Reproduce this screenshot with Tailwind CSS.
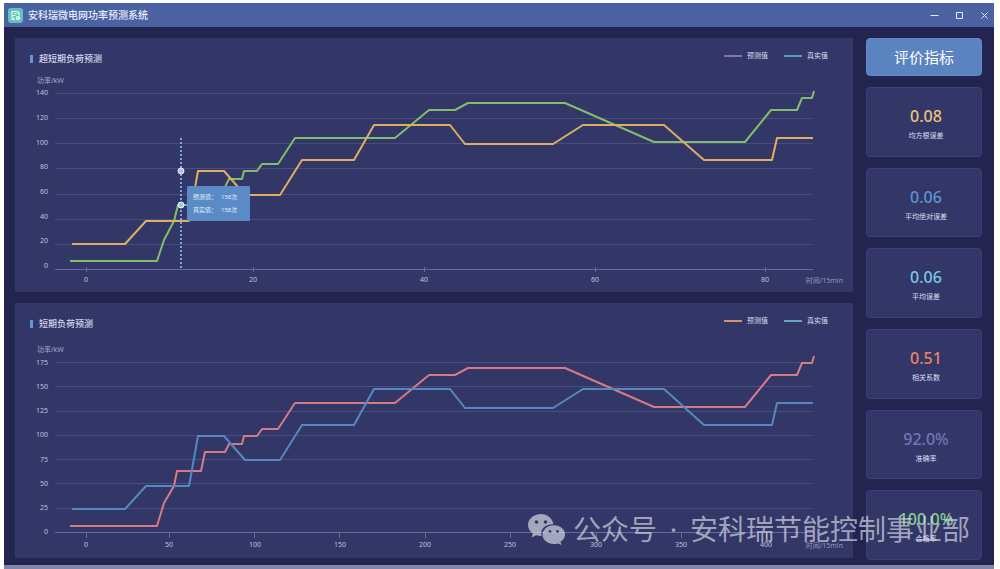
<!DOCTYPE html>
<html lang="zh-CN">

<head>
  <meta charset="UTF-8">
  <meta name="viewport" content="width=device-width, initial-scale=1">
  <title>安科瑞微电网功率预测系统</title>
  <script src="https://cdn.jsdelivr.net/npm/@tailwindcss/browser@4"></script>
</head>

<body class="bg-white pt-[3px] pl-1 pr-[6px] overflow-x-hidden font-['Noto_Sans','Noto_Sans_CJK_SC',sans-serif]">
  <div class="relative bg-[#242450] border-b-4 border-[#8286a5]">

    <!-- Title bar -->
    <header class="flex items-center h-6 pl-1 pr-[5px] bg-[#4a61a2] text-[#e6ebfa]">
      <svg class="size-[15px]" viewBox="0 0 15 15">
        <rect width="15" height="15" rx="3" fill="#62c3bb" />
        <path d="M4 11.500V3.500h5.500l1.500 1.500v2.500M4 7.500h3.500M6 5.500h3M6 9.500v2H4" fill="none" stroke="#e9fbf8" stroke-width="1.200" />
        <circle cx="10" cy="10" r="1.800" fill="#bdebe4" stroke="#e9fbf8" />
      </svg>
      <h1 class="ml-[5px] text-[10px] leading-6 font-medium">安科瑞微电网功率预测系统</h1>
      <div class="ml-auto flex gap-4">
        <button aria-label="最小化"><svg class="size-[9px]" viewBox="0 0 9 9" stroke="currentColor"><path d="M0.500 4.500h8" /></svg></button>
        <button aria-label="最大化"><svg class="size-[9px]" viewBox="0 0 9 9" fill="none" stroke="currentColor"><path d="M1.500 1.500h6v6h-6z" /></svg></button>
        <button aria-label="关闭"><svg class="size-[9px]" viewBox="0 0 9 9" stroke="currentColor"><path d="M1.500 1.500l6 6M7.500 1.500l-6 6" /></svg></button>
      </div>
    </header>

    <main class="flex gap-[13px] pt-[11px] pl-[11px] pr-3 pb-[5px]">

      <!-- Charts -->
      <div class="flex-1 min-w-0 flex flex-col gap-[11px] pb-[2px]">
        <section class="bg-[#323768]">
          <div class="flex items-start h-8 pt-3 pl-[15px] pr-[25px]">
            <h2 class="flex items-center gap-[6px] text-[9px] leading-[18px] font-medium text-[#d5d8ee]">
              <span class="w-[3px] h-2 bg-[#6b93d3]"></span>超短期负荷预测
            </h2>
            <ul class="ml-auto flex gap-4 text-[7px] leading-3 text-[#dcdff2]">
              <li class="flex items-center gap-[5px]"><span class="w-[18px] h-[2px] bg-[#8672b2]"></span>预测值</li>
              <li class="flex items-center gap-[5px]"><span class="w-[18px] h-[2px] bg-[#6099c8]"></span>真实值</li>
            </ul>
          </div>
          <svg class="block w-full" viewBox="15 70 838 222" font-size="7" fill="#bfc3df">
            <text x="37" y="83" fill="#a5a9cc">功率/kW</text>
            <path d="M55 93.500H813M55 118.500H813M55 143.500H813M55 168.500H813M55 194.500H813M55 219.500H813M55 244.500H813" stroke="#484c80" />
            <path d="M55 269.500H813M86.500 267v5M253.500 267v5M424.500 267v5M595.500 267v5M765.500 267v5" stroke="#656ba2" />
            <g text-anchor="end">
              <text x="48" y="95">140</text>
              <text x="48" y="120">120</text>
              <text x="48" y="145">100</text>
              <text x="48" y="169">80</text>
              <text x="48" y="194">60</text>
              <text x="48" y="219">40</text>
              <text x="48" y="243">20</text>
              <text x="48" y="268">0</text>
            </g>
            <g text-anchor="middle">
              <text x="86" y="282">0</text>
              <text x="253" y="282">20</text>
              <text x="424" y="282">40</text>
              <text x="595" y="282">60</text>
              <text x="765" y="282">80</text>
            </g>
            <text x="843" y="283" text-anchor="end" fill="#9398bf">时间/15min</text>
            <polyline fill="none" stroke="#7fbf68" stroke-width="2" stroke-linejoin="round" points="70,261 157,261 164,240 174,221 178,205 201,205 205,187 225,187 229,179 242,179 244,171 257,171 262,164 278,164 295,138 395,138 429,110 455,110 468,103 565,103 654,142 745,142 771,110 797,110 802,98 812,98 814,91" />
            <polyline fill="none" stroke="#dfae60" stroke-width="2" stroke-linejoin="round" points="72,244 125,244 146,221 189,221 198,171 224,171 245,195 280,195 302,160 354,160 374,125 450,125 465,144 553,144 583,125 664,125 704,160 772,160 777,138 813,138" />
            <path d="M181 138V269" stroke="#6fa8e2" stroke-width="2" stroke-dasharray="2 2" />
            <circle cx="181" cy="171" r="3" fill="#c9b9e0" stroke="#f0edfa" />
            <circle cx="181" cy="205" r="3" fill="#9fc6ea" stroke="#f0f6fd" />
            <rect x="187" y="186" width="63" height="35" rx="1" fill="#5a8bc6" />
            <g font-size="6" fill="#e3edfa">
              <text x="193" y="199">预测值：</text>
              <text x="221" y="199">158次</text>
              <text x="193" y="212">真实值：</text>
              <text x="221" y="212">158次</text>
            </g>
          </svg>
        </section>

        <section class="bg-[#323768]">
          <div class="flex items-start h-8 pt-3 pl-[15px] pr-[25px]">
            <h2 class="flex items-center gap-[6px] text-[9px] leading-[18px] font-medium text-[#d5d8ee]">
              <span class="w-[3px] h-2 bg-[#6b93d3]"></span>短期负荷预测
            </h2>
            <ul class="ml-auto flex gap-4 text-[7px] leading-3 text-[#dcdff2]">
              <li class="flex items-center gap-[5px]"><span class="w-[18px] h-[2px] bg-[#d0956c]"></span>预测值</li>
              <li class="flex items-center gap-[5px]"><span class="w-[18px] h-[2px] bg-[#68a4ba]"></span>真实值</li>
            </ul>
          </div>
          <svg class="block w-full" viewBox="15 335 838 223" font-size="7" fill="#bfc3df">
            <text x="37" y="352" fill="#a5a9cc">功率/kW</text>
            <path d="M55 362.500H813M55 386.500H813M55 411.500H813M55 435.500H813M55 459.500H813M55 483.500H813M55 508.500H813" stroke="#484c80" />
            <path d="M55 532.500H813M86.500 533v5M169.500 533v5M254.500 533v5M339.500 533v5M425.500 533v5M510.500 533v5M596.500 533v5M681.500 533v5M766.500 533v5" stroke="#656ba2" />
            <g text-anchor="end">
              <text x="48" y="365">175</text>
              <text x="48" y="389">150</text>
              <text x="48" y="413">125</text>
              <text x="48" y="437">100</text>
              <text x="48" y="462">75</text>
              <text x="48" y="486">50</text>
              <text x="48" y="510">25</text>
              <text x="48" y="534">0</text>
            </g>
            <g text-anchor="middle">
              <text x="86" y="547">0</text>
              <text x="169" y="547">50</text>
              <text x="255" y="547">100</text>
              <text x="340" y="547">150</text>
              <text x="425" y="547">200</text>
              <text x="510" y="547">250</text>
              <text x="596" y="547">300</text>
              <text x="681" y="547">350</text>
              <text x="766" y="547">400</text>
            </g>
            <text x="843" y="548" text-anchor="end" fill="#9398bf">时间/15min</text>
            <polyline fill="none" stroke="#d67a84" stroke-width="2" stroke-linejoin="round" points="70,526 157,526 164,503 174,486 177,471 201,471 205,452 225,452 229,444 242,444 244,436 257,436 262,429 278,429 295,403 395,403 429,375 455,375 468,368 565,368 654,407 745,407 771,375 797,375 802,363 812,363 814,356" />
            <polyline fill="none" stroke="#5688c0" stroke-width="2" stroke-linejoin="round" points="72,509 125,509 146,486 189,486 198,436 224,436 245,460 280,460 302,425 354,425 374,389 450,389 465,408 553,408 583,389 664,389 704,425 772,425 777,403 813,403" />
          </svg>
        </section>
      </div>

      <!-- Metrics -->
      <aside class="w-[116px] flex flex-col gap-[11px] text-center">
        <button class="h-[38px] rounded bg-[#5a83c0] border border-[#6189c6] text-[15px] leading-5 text-white">评价指标</button>
        <div class="flex-1 flex flex-col justify-center pt-2 pl-1 rounded border border-[#3b4177] bg-[#323768]">
          <p class="text-base leading-5 font-medium text-[#efc27c]">0.08</p>
          <p class="text-[7px] leading-5 text-[#dcdff2]">均方根误差</p>
        </div>
        <div class="flex-1 flex flex-col justify-center pt-2 pl-1 rounded border border-[#3b4177] bg-[#323768]">
          <p class="text-base leading-5 font-medium text-[#5c94cf]">0.06</p>
          <p class="text-[7px] leading-5 text-[#dcdff2]">平均绝对误差</p>
        </div>
        <div class="flex-1 flex flex-col justify-center pt-2 pl-1 rounded border border-[#3b4177] bg-[#323768]">
          <p class="text-base leading-5 font-medium text-[#76c8e0]">0.06</p>
          <p class="text-[7px] leading-5 text-[#dcdff2]">平均误差</p>
        </div>
        <div class="flex-1 flex flex-col justify-center pt-2 pl-1 rounded border border-[#3b4177] bg-[#323768]">
          <p class="text-base leading-5 font-medium text-[#e88468]">0.51</p>
          <p class="text-[7px] leading-5 text-[#dcdff2]">相关系数</p>
        </div>
        <div class="flex-1 flex flex-col justify-center pt-2 pl-1 rounded border border-[#3b4177] bg-[#323768]">
          <p class="text-base leading-5 font-medium text-[#7474b8]">92.0%</p>
          <p class="text-[7px] leading-5 text-[#dcdff2]">准确率</p>
        </div>
        <div class="flex-1 flex flex-col justify-center pt-2 pl-1 rounded border border-[#3b4177] bg-[#323768]">
          <p class="text-base leading-5 font-medium text-[#86cf8c]">100.0%</p>
          <p class="text-[7px] leading-5 text-[#dcdff2]">合格率</p>
        </div>
      </aside>
    </main>

    <!-- Watermark -->
    <div class="absolute right-6 bottom-4 flex items-center whitespace-nowrap text-[28px] leading-10 text-[#d4d5e2]/70 pointer-events-none">
      <svg class="w-[39px] h-8 mr-[7px]" viewBox="0 0 39 32" fill="currentColor">
        <path fill-rule="evenodd" d="M14 1C6.500 1 1 6 1 12c0 3.600 1.800 6.500 4.800 8.500L4.600 24.500l4.700-2.300c1.800.5 3.600.8 5.300.7C12.800 17 17.500 11.300 26.500 11.300 25.500 5.300 20.500 1 14 1zM9.500 7.200a1.800 1.800 0 1 1 0 3.600 1.800 1.800 0 0 1 0-3.600zm9 0a1.800 1.800 0 1 1 0 3.600 1.800 1.800 0 0 1 0-3.600z" />
        <path fill-rule="evenodd" d="M26.800 12.200c-6.400 0-11.300 4.200-11.300 9.400S20.400 31 26.800 31c1.400 0 2.800-.2 4-.6l3.700 1.600-1-3.200c2.900-1.800 4.600-4.300 4.600-7.200 0-5.200-4.900-9.400-11.300-9.400zM23 17a1.500 1.500 0 1 1 0 3 1.500 1.500 0 0 1 0-3zm7.500 0a1.500 1.500 0 1 1 0 3 1.500 1.500 0 0 1 0-3z" />
      </svg>
      <span>公众号</span>
      <span class="w-[33px] text-center">·</span>
      <span>安科瑞节能控制事业部</span>
    </div>
  </div>
</body>

</html>
